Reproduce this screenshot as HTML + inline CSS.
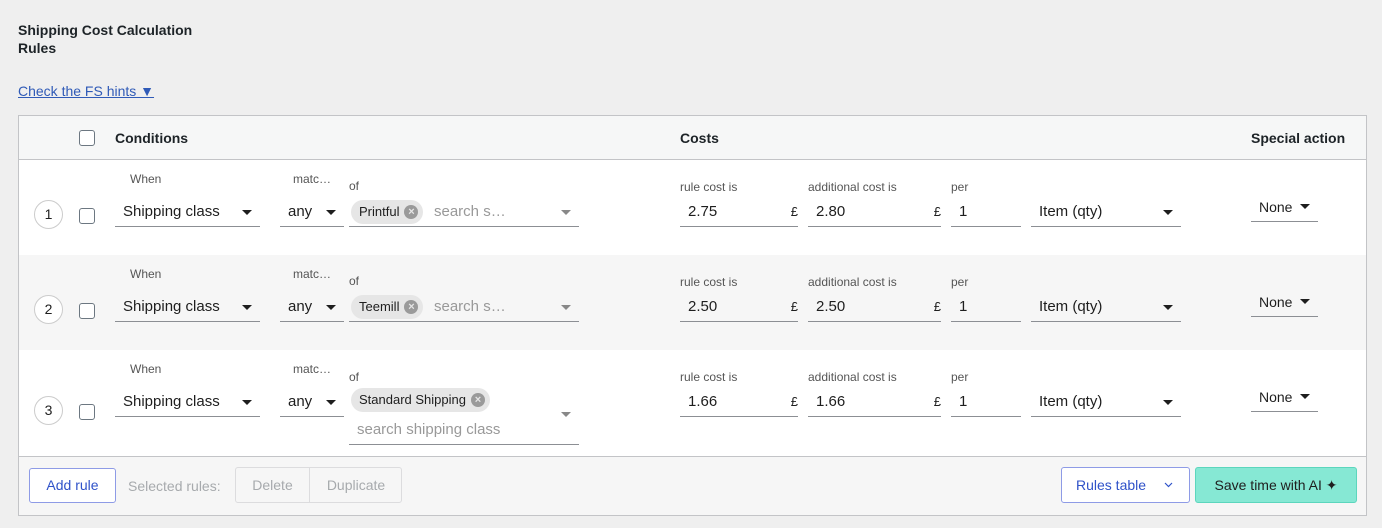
<!DOCTYPE html>
<html><head><meta charset="utf-8"><style>
*{box-sizing:border-box;margin:0;padding:0}
body{width:1382px;height:528px;background:#efefef;font-family:"Liberation Sans",Arial,sans-serif;color:#1e1e1e;position:relative;overflow:hidden}
.a{position:absolute;white-space:nowrap}
h1{position:absolute;left:18px;top:21px;font-size:14px;font-weight:bold;line-height:18px;color:#1d2327}
.link{left:18px;top:83px;font-size:14px;color:#2f5ab7;text-decoration:underline}
.tbl{position:absolute;left:18px;top:115px;width:1349px;height:401px;border:1px solid #c3c4c7;background:#fff}
.in{position:absolute;left:0;top:0;width:1347px;height:399px}
.row>*,.hdr>*,.ftr>*{margin-left:-1px}
.hdr{position:absolute;left:0;top:0;width:100%;height:44px;background:#f6f7f7;border-bottom:1px solid #c3c4c7}
.hdr .a{top:14px;font-size:14px;font-weight:bold;color:#1d2327}
.row{position:absolute;left:0;width:100%}
.cb{position:absolute;width:16px;height:16px;border:1.3px solid #6c7781;border-radius:3px;background:#fff}
.num{position:absolute;left:16px;width:29px;height:29px;border:1px solid #ccc;border-radius:50%;text-align:center;line-height:27px;font-size:14px;background:#fff}
.lbl{position:absolute;font-size:12px;color:#555}
.fld{position:absolute;height:30px;border-bottom:1px solid #8c8f94;font-size:15px;line-height:30px;padding-left:8px;color:#1e1e1e}
.car{position:absolute;right:8px;top:13px;width:0;height:0;border-left:5px solid transparent;border-right:5px solid transparent;border-top:5px solid #1e1e1e}
.car.g{border-top-color:#888}
.tag{position:absolute;height:24px;background:#e6e6e6;border-radius:12px;font-size:13px;line-height:24px;padding:0 24px 0 8px;color:#1e1e1e}
.tag i{position:absolute;right:5px;top:5px;width:14px;height:14px;border-radius:50%;background:#9a9a9a;color:#e6e6e6;font-style:normal;font-size:11px;line-height:14px;text-align:center;font-weight:bold}
.ph{color:#999}
.cur{position:absolute;font-size:13px;color:#1e1e1e}
.ftr{position:absolute;left:0;top:340px;width:100%;height:59px;background:#f6f6f6;border-top:1px solid #c3c4c7}
.btn{position:absolute;height:35px;border:1px solid #8e9be6;border-radius:3px;background:#fff;font-size:14px;color:#2f52c9;line-height:33px;text-align:center}
</style></head><body>
<h1>Shipping Cost Calculation<br>Rules</h1>
<div class="a link">Check the FS hints ▼</div>
<div class="tbl"><div class="in">
 <div class="hdr">
  <div class="cb" style="left:61px;top:14px"></div>
  <div class="a" style="left:97px">Conditions</div>
  <div class="a" style="left:662px">Costs</div>
  <div class="a" style="left:1233px">Special action</div>
 </div>

 <div class="row" style="top:44px;height:95px;background:#fff">
  <div class="num" style="top:40px">1</div>
  <div class="cb" style="left:61px;top:48px"></div>
  <div class="lbl" style="left:112px;top:12px">When</div>
  <div class="fld" style="left:97px;top:37px;width:145px">Shipping class<span class="car"></span></div>
  <div class="lbl" style="left:275px;top:12px">matc…</div>
  <div class="fld" style="left:262px;top:37px;width:64px">any<span class="car"></span></div>
  <div class="lbl" style="left:331px;top:19px">of</div>
  <div class="fld" style="left:331px;top:37px;width:230px;padding-left:0"><span class="tag" style="left:2px;top:3px">Printful<i>×</i></span><span class="ph" style="position:absolute;left:85px">search s…</span><span class="car g"></span></div>
  <div class="lbl" style="left:662px;top:20px">rule cost is</div>
  <div class="fld" style="left:662px;top:37px;width:118px">2.75<span class="cur" style="right:0;top:0">£</span></div>
  <div class="lbl" style="left:790px;top:20px">additional cost is</div>
  <div class="fld" style="left:790px;top:37px;width:133px">2.80<span class="cur" style="right:0;top:0">£</span></div>
  <div class="lbl" style="left:933px;top:20px">per</div>
  <div class="fld" style="left:933px;top:37px;width:70px">1</div>
  <div class="fld" style="left:1013px;top:37px;width:150px">Item (qty)<span class="car"></span></div>
  <div class="fld" style="left:1233px;top:32px;width:67px;font-size:14px">None<span class="car" style="top:12px"></span></div>
 </div>

 <div class="row" style="top:139px;height:95px;background:#f6f6f6">
  <div class="num" style="top:40px">2</div>
  <div class="cb" style="left:61px;top:48px"></div>
  <div class="lbl" style="left:112px;top:12px">When</div>
  <div class="fld" style="left:97px;top:37px;width:145px">Shipping class<span class="car"></span></div>
  <div class="lbl" style="left:275px;top:12px">matc…</div>
  <div class="fld" style="left:262px;top:37px;width:64px">any<span class="car"></span></div>
  <div class="lbl" style="left:331px;top:19px">of</div>
  <div class="fld" style="left:331px;top:37px;width:230px;padding-left:0"><span class="tag" style="left:2px;top:3px">Teemill<i>×</i></span><span class="ph" style="position:absolute;left:85px">search s…</span><span class="car g"></span></div>
  <div class="lbl" style="left:662px;top:20px">rule cost is</div>
  <div class="fld" style="left:662px;top:37px;width:118px">2.50<span class="cur" style="right:0;top:0">£</span></div>
  <div class="lbl" style="left:790px;top:20px">additional cost is</div>
  <div class="fld" style="left:790px;top:37px;width:133px">2.50<span class="cur" style="right:0;top:0">£</span></div>
  <div class="lbl" style="left:933px;top:20px">per</div>
  <div class="fld" style="left:933px;top:37px;width:70px">1</div>
  <div class="fld" style="left:1013px;top:37px;width:150px">Item (qty)<span class="car"></span></div>
  <div class="fld" style="left:1233px;top:32px;width:67px;font-size:14px">None<span class="car" style="top:12px"></span></div>
 </div>

 <div class="row" style="top:234px;height:106px;background:#fff">
  <div class="num" style="top:46px">3</div>
  <div class="cb" style="left:61px;top:54px"></div>
  <div class="lbl" style="left:112px;top:12px">When</div>
  <div class="fld" style="left:97px;top:37px;width:145px">Shipping class<span class="car"></span></div>
  <div class="lbl" style="left:275px;top:12px">matc…</div>
  <div class="fld" style="left:262px;top:37px;width:64px">any<span class="car"></span></div>
  <div class="lbl" style="left:331px;top:20px">of</div>
  <div class="tag" style="left:333px;top:38px">Standard Shipping<i>×</i></div>
  <div class="fld" style="left:331px;top:65px;width:230px"><span class="ph">search shipping class</span></div>
  <span class="car g" style="right:auto;left:543px;top:62px;position:absolute"></span>
  <div class="lbl" style="left:662px;top:20px">rule cost is</div>
  <div class="fld" style="left:662px;top:37px;width:118px">1.66<span class="cur" style="right:0;top:0">£</span></div>
  <div class="lbl" style="left:790px;top:20px">additional cost is</div>
  <div class="fld" style="left:790px;top:37px;width:133px">1.66<span class="cur" style="right:0;top:0">£</span></div>
  <div class="lbl" style="left:933px;top:20px">per</div>
  <div class="fld" style="left:933px;top:37px;width:70px">1</div>
  <div class="fld" style="left:1013px;top:37px;width:150px">Item (qty)<span class="car"></span></div>
  <div class="fld" style="left:1233px;top:32px;width:67px;font-size:14px">None<span class="car" style="top:12px"></span></div>
 </div>

 <div class="ftr">
  <div class="btn" style="left:11px;top:11px;width:87px">Add rule</div>
  <div class="a" style="left:110px;top:21px;font-size:14px;color:#a7aaad">Selected rules:</div>
  <div class="a" style="left:217px;top:10px;width:167px;height:36px;border:1px solid #dcdcde;border-radius:3px;font-size:14px;color:#a7aaad;line-height:34px">
   <span style="position:absolute;left:0;width:73px;text-align:center">Delete</span>
   <span style="position:absolute;left:73px;top:0;width:1px;height:34px;background:#dcdcde"></span>
   <span style="position:absolute;left:74px;width:92px;text-align:center">Duplicate</span>
  </div>
  <div class="btn" style="left:1043px;top:10px;width:129px;height:36px;line-height:34px;text-align:left;padding-left:14px">Rules table
   <svg style="position:absolute;left:102px;top:14px" width="9" height="6" viewBox="0 0 9 6"><path d="M1 1l3.5 3.5L8 1" fill="none" stroke="#2f52c9" stroke-width="1.2"/></svg></div>
  <div class="a" style="left:1177px;top:10px;width:162px;height:36px;background:#86e8d4;border:1px solid #5cd6bd;border-radius:3px;font-size:14px;line-height:34px;text-align:center;color:#1e1e1e">Save time with AI ✦</div>
 </div>
</div></div>
</body></html>
